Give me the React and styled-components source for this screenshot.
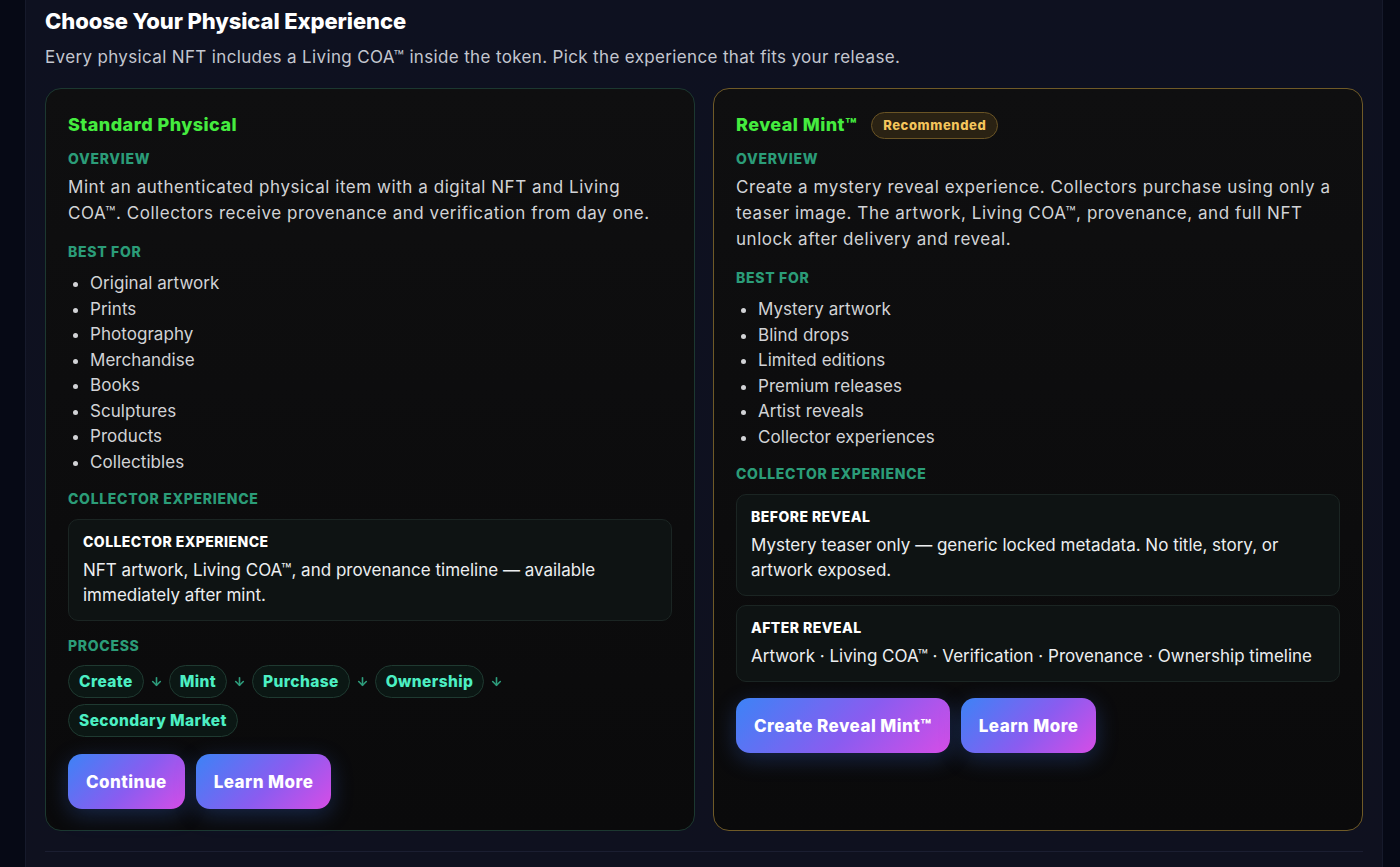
import React from "react";
import styled, { createGlobalStyle } from "styled-components";
import { ArrowDown } from "lucide-react";

const GlobalStyle = createGlobalStyle`
  html, body {
    margin: 0;
    padding: 0;
    background: #060915;
    font-family: "Inter", "Open Sans", sans-serif;
  }
  * { box-sizing: border-box; }
`;

const experiences = [
  {
    id: "standard",
    title: "Standard Physical",
    tone: "green",
    overview:
      "Mint an authenticated physical item with a digital NFT and Living COA™. Collectors receive provenance and verification from day one.",
    bestFor: [
      "Original artwork",
      "Prints",
      "Photography",
      "Merchandise",
      "Books",
      "Sculptures",
      "Products",
      "Collectibles",
    ],
    collector: [
      {
        heading: "COLLECTOR EXPERIENCE",
        text: "NFT artwork, Living COA™, and provenance timeline — available immediately after mint.",
      },
    ],
    process: ["Create", "Mint", "Purchase", "Ownership", "Secondary Market"],
    actions: ["Continue", "Learn More"],
  },
  {
    id: "reveal",
    title: "Reveal Mint™",
    badge: "Recommended",
    tone: "gold",
    overview:
      "Create a mystery reveal experience. Collectors purchase using only a teaser image. The artwork, Living COA™, provenance, and full NFT unlock after delivery and reveal.",
    bestFor: [
      "Mystery artwork",
      "Blind drops",
      "Limited editions",
      "Premium releases",
      "Artist reveals",
      "Collector experiences",
    ],
    collector: [
      {
        heading: "BEFORE REVEAL",
        text: "Mystery teaser only — generic locked metadata. No title, story, or artwork exposed.",
      },
      {
        heading: "AFTER REVEAL",
        text: "Artwork · Living COA™ · Verification · Provenance · Ownership timeline",
      },
    ],
    actions: ["Create Reveal Mint™", "Learn More"],
  },
];

const Page = styled.div`
  min-height: 867px;
  padding: 0 17px 0 25px;
`;

const Panel = styled.section`
  min-height: 867px;
  background: linear-gradient(180deg, #0e1120 0%, #0f111f 100%);
  border-left: 1px solid #161a2b;
  border-right: 1px solid #161a2b;
  padding: 7px 19px 0 19px;
`;

const Heading = styled.h2`
  margin: 0;
  color: #ffffff;
  font-size: 22px;
  line-height: 28px;
  font-weight: 800;
  letter-spacing: -0.1px;
`;

const Intro = styled.p`
  margin: 10px 0 0;
  color: #c3c6cf;
  font-size: 17px;
  line-height: 24px;
  letter-spacing: 0.35px;
`;

const Grid = styled.div`
  display: grid;
  grid-template-columns: 1fr 1fr;
  gap: 18px;
  margin-top: 19px;
  padding-bottom: 20px;
  border-bottom: 1px solid #1b1e31;
`;

const Card = styled.article`
  background: linear-gradient(180deg, #0f0f10 0%, #0a0a0b 100%);
  border: 1px solid ${(p) => (p.$tone === "gold" ? "#6f5a27" : "#1c3830")};
  border-radius: 16px;
  padding: 24px 22px 21px;
  display: flex;
  flex-direction: column;
  align-items: flex-start;
`;

const TitleRow = styled.div`
  display: flex;
  align-items: center;
  gap: 14px;
  height: 24px;
  margin-bottom: 13px;
`;

const Title = styled.h3`
  margin: 0;
  color: #45ec3f;
  font-size: 18px;
  line-height: 24px;
  font-weight: 800;
  letter-spacing: 0.45px;
`;

const Badge = styled.span`
  display: inline-flex;
  align-items: center;
  height: 27px;
  padding: 0 11px;
  border-radius: 999px;
  background: #2a2213;
  border: 1px solid #6a5425;
  color: #f5c65c;
  font-size: 13px;
  font-weight: 800;
  letter-spacing: 0.6px;
`;

const Label = styled.div`
  color: #2b9c78;
  font-size: 14px;
  line-height: 18px;
  font-weight: 800;
  letter-spacing: 0.7px;
  margin-top: ${(p) => p.$gap || 0}px;
  margin-bottom: 6px;
`;

const Body = styled.p`
  margin: 0;
  color: #d2d3d6;
  font-size: 17px;
  line-height: 26px;
  letter-spacing: 0.55px;
`;

const List = styled.ul`
  margin: 4px 0 0;
  padding-left: 22px;
  color: #d2d3d6;
  font-size: 17px;
  line-height: 25.5px;
  letter-spacing: 0.05px;
`;

const InfoBox = styled.div`
  align-self: stretch;
  background: #0e1313;
  border: 1px solid #1b2523;
  border-radius: 10px;
  padding: 12px 14px 12px;
  margin-top: ${(p) => p.$gap || 0}px;
`;

const InfoHeading = styled.div`
  color: #ffffff;
  font-size: 14px;
  line-height: 20px;
  font-weight: 800;
  letter-spacing: 0.45px;
  margin-bottom: 6px;
`;

const InfoText = styled.div`
  color: #eceef0;
  font-size: 17px;
  line-height: 25px;
`;

const Steps = styled.div`
  display: flex;
  flex-wrap: wrap;
  align-items: center;
  gap: 6px 5px;
  margin-top: 4px;
`;

const Step = styled.span`
  display: inline-flex;
  align-items: center;
  height: 33px;
  padding: 0 10px;
  border-radius: 999px;
  background: #0b1714;
  border: 1px solid #1f3a31;
  color: #4cefc3;
  font-size: 15.5px;
  font-weight: 800;
  letter-spacing: 0.4px;
`;

const StepArrow = styled.span`
  display: inline-flex;
  align-items: center;
  color: #2e9d7c;
  padding: 0 1px;
`;

const Actions = styled.div`
  display: flex;
  gap: 11px;
  margin-top: ${(p) => p.$gap || 17}px;
`;

const ActionButton = styled.button`
  height: 55px;
  padding: 0 18px;
  border: none;
  border-radius: 14px;
  background: linear-gradient(135deg, #3c83f6 0%, #8a5cf0 55%, #d64de6 100%);
  color: #ffffff;
  font-family: inherit;
  font-size: 17px;
  font-weight: 800;
  letter-spacing: 0.45px;
  box-shadow: 0 6px 22px rgba(56, 110, 230, 0.28);
  cursor: pointer;
`;

function ExperienceCard({ item }) {
  return (
    <Card $tone={item.tone}>
      <TitleRow>
        <Title>{item.title}</Title>
        {item.badge && <Badge>{item.badge}</Badge>}
      </TitleRow>

      <Label>OVERVIEW</Label>
      <Body>{item.overview}</Body>

      <Label $gap={17}>BEST FOR</Label>
      <List>
        {item.bestFor.map((b) => (
          <li key={b}>{b}</li>
        ))}
      </List>

      <Label $gap={15}>COLLECTOR EXPERIENCE</Label>
      {item.collector.map((c, i) => (
        <InfoBox key={c.heading} $gap={i === 0 ? 5 : 9}>
          <InfoHeading>{c.heading}</InfoHeading>
          <InfoText>{c.text}</InfoText>
        </InfoBox>
      ))}

      {item.process && (
        <>
          <Label $gap={16}>PROCESS</Label>
          <Steps>
            {item.process.map((s, i) => (
              <React.Fragment key={s}>
                <Step>{s}</Step>
                {i < item.process.length - 1 && (
                  <StepArrow>
                    <ArrowDown size={13} strokeWidth={3} />
                  </StepArrow>
                )}
              </React.Fragment>
            ))}
          </Steps>
        </>
      )}

      <Actions $gap={item.process ? 17 : 16}>
        {item.actions.map((a) => (
          <ActionButton key={a}>{a}</ActionButton>
        ))}
      </Actions>
    </Card>
  );
}

export default function App() {
  return (
    <>
      <GlobalStyle />
      <Page>
        <Panel>
          <Heading>Choose Your Physical Experience</Heading>
          <Intro>
            Every physical NFT includes a Living COA™ inside the token. Pick the
            experience that fits your release.
          </Intro>
          <Grid>
            {experiences.map((e) => (
              <ExperienceCard key={e.id} item={e} />
            ))}
          </Grid>
        </Panel>
      </Page>
    </>
  );
}
